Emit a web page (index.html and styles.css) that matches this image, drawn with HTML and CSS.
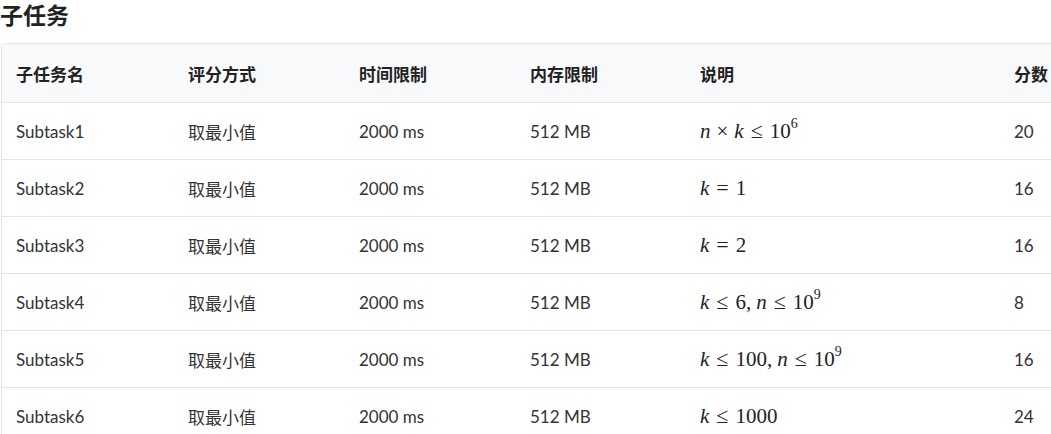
FILE: index.html
```html
<!DOCTYPE html>
<html lang="zh">
<head>
<meta charset="utf-8">
<link rel="stylesheet" href="styles.css">
</head>
<body>
<div class="page">
  <h2 class="title">子任务</h2>
  <div class="table-wrap">
    <table class="subtasks">
      <colgroup>
        <col class="c1"><col class="c2"><col class="c3"><col class="c4"><col class="c5"><col class="c6">
      </colgroup>
      <thead>
        <tr><th>子任务名</th><th>评分方式</th><th>时间限制</th><th>内存限制</th><th>说明</th><th>分数</th></tr>
      </thead>
      <tbody>
        <tr><td>Subtask1</td><td>取最小值</td><td>2000 ms</td><td>512 MB</td><td><span class="math"><i>n</i><span class="op">×</span><i>k</i><span class="op rel">≤</span>10<sup>6</sup></span></td><td>20</td></tr>
        <tr><td>Subtask2</td><td>取最小值</td><td>2000 ms</td><td>512 MB</td><td><span class="math"><i>k</i><span class="op rel">=</span>1</span></td><td>16</td></tr>
        <tr><td>Subtask3</td><td>取最小值</td><td>2000 ms</td><td>512 MB</td><td><span class="math"><i>k</i><span class="op rel">=</span>2</span></td><td>16</td></tr>
        <tr><td>Subtask4</td><td>取最小值</td><td>2000 ms</td><td>512 MB</td><td><span class="math"><i>k</i><span class="op rel">≤</span>6,<i class="sp">n</i><span class="op rel">≤</span>10<sup>9</sup></span></td><td>8</td></tr>
        <tr><td>Subtask5</td><td>取最小值</td><td>2000 ms</td><td>512 MB</td><td><span class="math"><i>k</i><span class="op rel">≤</span>100,<i class="sp">n</i><span class="op rel">≤</span>10<sup>9</sup></span></td><td>16</td></tr>
        <tr><td>Subtask6</td><td>取最小值</td><td>2000 ms</td><td>512 MB</td><td><span class="math"><i>k</i><span class="op rel">≤</span>1000</span></td><td>24</td></tr>
      </tbody>
    </table>
  </div>
</div>
</body>
</html>
```

FILE: styles.css
```css
html, body {
  margin: 0;
  padding: 0;
  background: #fff;
  overflow: hidden;
}
body {
  font-family: Lato, "Noto Sans CJK SC", sans-serif;
  color: #333;
}
.page {
  width: 1051px;
  height: 434px;
  overflow: hidden;
}
.title {
  margin: 0;
  padding-top: 1px;
  font-family: "Noto Sans CJK SC", sans-serif;
  font-size: 23px;
  font-weight: 700;
  line-height: 26px;
  color: #222;
  height: 42px;
}
.table-wrap {
  margin-left: 1px;
  width: 1120px;
  border: 1px solid #e4e4e4;
  border-radius: 4px;
  overflow: hidden;
}
.subtasks {
  border-collapse: collapse;
  table-layout: fixed;
  width: 1120px;
  font-size: 17px;
}
.c1 { width: 172px; }
.c2 { width: 171px; }
.c3 { width: 171px; }
.c4 { width: 170px; }
.c5 { width: 314px; }
.c6 { width: 122px; }
.subtasks th {
  background: #f8f9fa;
  text-align: left;
  font-family: "Noto Sans CJK SC", sans-serif;
  font-weight: 700;
  font-size: 17px;
  color: #222;
  height: 58px;
  padding: 0 0 0 14px;
  border-bottom: 1px solid #e4e4e4;
}
.subtasks td {
  height: 56px;
  padding: 0 0 0 14px;
  border-bottom: 1px solid #e4e4e4;
  font-family: Lato, "Noto Sans CJK SC", sans-serif;
  color: #333;
}
.subtasks tr:last-child td {
  border-bottom: none;
}
.math {
  font-family: "Liberation Serif", "DejaVu Serif", serif;
  font-size: 21px;
  color: #222;
  white-space: nowrap;
}
.math i {
  font-style: italic;
}
.math .op {
  padding: 0 6px;
}
.math .rel {
  padding: 0 7px;
  font-size: 22px;
}
.math .sp {
  padding-left: 5px;
}
.math sup {
  font-size: 14px;
  vertical-align: 10px;
  line-height: 0;
}
```
